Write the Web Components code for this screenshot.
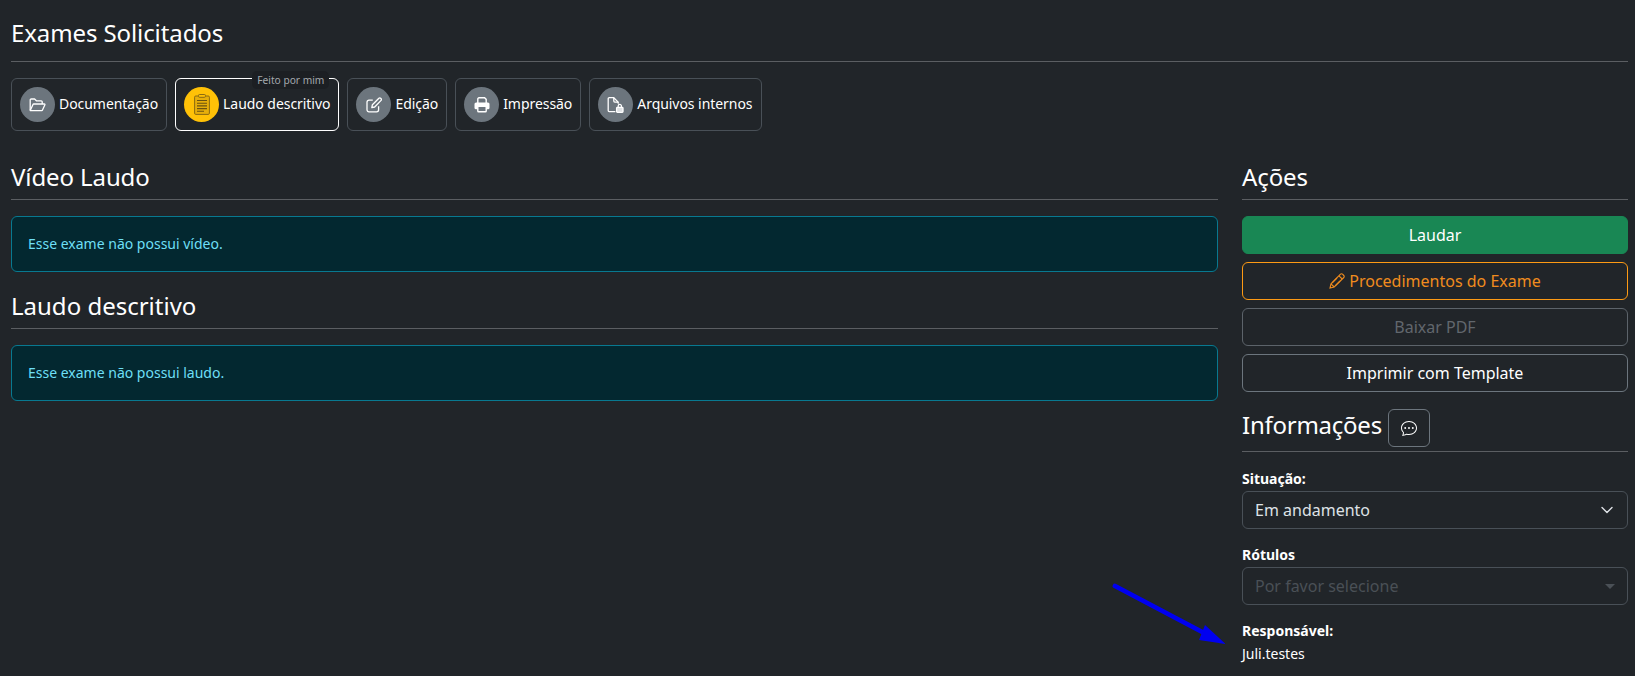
<!DOCTYPE html>
<html lang="pt-BR">
<head>
<meta charset="utf-8">
<title>Exames Solicitados</title>
<style>
  html, body { margin: 0; height: 100%; }
  body {
    background: #212529;
    color: #fff;
    font: 16px/24px "Noto Sans", sans-serif;
    overflow: hidden;
  }
</style>
</head>
<body>
<exam-page></exam-page>

<template id="tmpl-heading">
  <style>
    :host { display: block; border-bottom: 1px solid #5b5e62; }
    .in { display: flex; align-items: center; gap: 6px; min-height: 34px; font-size: 24px; line-height: 29px; padding-bottom: var(--pb, 6px); color: #fff; letter-spacing: var(--ls, -.1px); }
  </style>
  <div class="in"><slot></slot></div>
</template>

<template id="tmpl-tab">
  <style>
    :host { display: block; position: relative; }
    .tab { display: flex; align-items: center; gap: 4px; height: 53px; box-sizing: border-box; padding: 0 8px; border: 1px solid #495057; border-radius: 6px; font-size: 14px; letter-spacing: -.05px; white-space: nowrap; color: #fff; }
    .label { padding-bottom: 2px; }
    :host([active]) .tab { border-color: #fff; }
    .circle { width: 35px; height: 35px; border-radius: 50%; background: #6c757d; display: flex; align-items: center; justify-content: center; flex: none; }
    :host([active]) .circle { background: #ffc107; }
    .badge { position: absolute; top: -7px; right: 10px; height: 18px; padding: 0 5px; border-radius: 5px; background: #1c1f23; color: #a3a8ad; font-size: 10.2px; line-height: 18px; white-space: nowrap; letter-spacing: 0; }
    .badge:empty { display: none; }
  </style>
  <div class="tab"><span class="circle"><slot name="icon"></slot></span><span class="label"><slot></slot></span></div>
  <span class="badge"></span>
</template>

<template id="tmpl-alert">
  <style>
    :host { display: flex; height: 56px; box-sizing: border-box; padding: 0 16px; align-items: center; background: #032830; border: 1px solid #087990; border-radius: 6px; color: #6edff6; font-size: 14px; }
  </style>
  <slot></slot>
</template>

<template id="tmpl-btn">
  <style>
    :host { display: flex; align-items: center; justify-content: center; gap: 4px; height: 38px; box-sizing: border-box; border: 1px solid #6c757d; border-radius: 6px; color: #fff; font-size: 16px; }
    :host([kind="success"]) { background: #198754; border-color: #198754; }
    :host([kind="warning"]) { border-color: #fd9a14; color: #f08c1e; }
    :host([kind="disabled"]) { border-color: #5c636a; color: #61676d; }
  </style>
  <slot></slot>
</template>

<template id="tmpl-field">
  <style>
    :host { display: block; }
    label { display: block; font-size: 14px; font-weight: 700; line-height: 21px; margin-bottom: 2px; color: #fff; }
    .box { display: flex; align-items: center; justify-content: space-between; height: 38px; box-sizing: border-box; padding: 0 12px; border: 1px solid #495057; border-radius: 6px; color: #dee2e6; font-size: 16px; }
    :host([disabled]) .box { color: #4a5056; }
    svg { display: block; }
  </style>
  <label></label>
  <div class="box"><span><slot></slot></span><span class="arrow"></span></div>
</template>

<script>
  const ICONS = {
    folder: '<svg width="17" height="16" viewBox="0 0 17 16" fill="none" stroke="#fff" stroke-width="1.3" stroke-linejoin="round"><path d="M1.2 13V3a1 1 0 0 1 1-1h3.4l1.8 1.8h4.8a1 1 0 0 1 1 1V7"/><path d="M1.2 13.6 4 7.4a.8.8 0 0 1 .7-.4h10.6a.6.6 0 0 1 .6.8l-2.4 5.3a.8.8 0 0 1-.7.5H1.8a.6.6 0 0 1-.6-.6z"/></svg>',
    clipboard: '<svg width="16" height="21" viewBox="0 0 16 21"><rect x=".6" y="2" width="14.8" height="18.4" rx="1.2" fill="#e6ae0b" stroke="#8a6a12" stroke-width="1"/><rect x="4.6" y=".5" width="6.8" height="2.8" rx=".8" fill="#ffc107" stroke="#8a6a12" stroke-width="1"/><path d="M3 6.5h10M3 9.2h10M3 11.9h10M3 14.6h10M3 17.2h7" stroke="#6b5310" stroke-width="1.1"/></svg>',
    edit: '<svg width="16" height="16" viewBox="0 0 16 16" fill="none" stroke="#fff" stroke-width="1.3" stroke-linejoin="round"><path d="M12.6 9.2v3.6a2 2 0 0 1-2 2H3a2 2 0 0 1-2-2V5.2a2 2 0 0 1 2-2h3.8"/><path d="m5.8 10.6.6-2.9L12.9 1.2a1.2 1.2 0 0 1 1.7 0l.5.5a1.2 1.2 0 0 1 0 1.7L8.7 10z"/></svg>',
    printer: '<svg width="16" height="16" viewBox="0 0 16 16"><path d="M3.8 6V2a1.2 1.2 0 0 1 1.2-1.2h5.6L12.2 2.4V6" fill="none" stroke="#fff" stroke-width="1.4"/><rect x=".5" y="5.5" width="15" height="6.8" rx="1.6" fill="#fff"/><rect x="3.8" y="9.4" width="8.4" height="5.4" rx=".8" fill="#6c757d" stroke="#fff" stroke-width="1.4"/></svg>',
    filelock: '<svg width="17" height="16" viewBox="0 0 17 16" fill="none" stroke="#fff" stroke-width="1.3" stroke-linejoin="round"><path d="M8.4 14.6H2.2a1 1 0 0 1-1-1V1.7a1 1 0 0 1 1-1h4.6l4.4 4.4v1.6"/><path d="M6.8.7v3.4a1 1 0 0 0 1 1h3.4"/><rect x="9.6" y="10.4" width="6.4" height="4.9" rx=".8" fill="#dfe2e5"/><path d="M11.2 10.4V9a1.6 1.6 0 0 1 3.2 0v1.4"/></svg>',
    pencil: '<svg width="16" height="16" viewBox="0 0 16 16" fill="none" stroke="#f08c1e" stroke-width="1.1"><path d="M11.5 1.2a1.4 1.4 0 0 1 2 0l1.3 1.3a1.4 1.4 0 0 1 0 2L5.2 14 1 15l1-4.2z"/><path d="M10 2.8 13.2 6M2 10.8 5.2 14M8 5l-4.8 4.8M11 8l-4.8 4.8"/></svg>',
    chat: '<svg width="16" height="16" viewBox="0 0 16 16" fill="#fff"><path d="M5 8a1 1 0 1 1-2 0 1 1 0 0 1 2 0m4 0a1 1 0 1 1-2 0 1 1 0 0 1 2 0m3 1a1 1 0 1 0 0-2 1 1 0 0 0 0 2" transform="translate(.4 .4) scale(.95)"/><path d="m2.165 15.803.02-.004c1.83-.363 2.948-.842 3.468-1.105A9 9 0 0 0 8 15c4.418 0 8-3.134 8-7s-3.582-7-8-7-8 3.134-8 7c0 1.76.743 3.37 1.97 4.6a10.4 10.4 0 0 1-.524 2.318l-.003.011a11 11 0 0 1-.244.637c-.079.186.074.394.273.362a22 22 0 0 0 .693-.125m.8-3.108a1 1 0 0 0-.287-.801C1.618 10.83 1 9.468 1 8c0-3.192 3.004-6 7-6s7 2.808 7 6-3.004 6-7 6a8 8 0 0 1-2.088-.272 1 1 0 0 0-.711.074c-.387.196-1.24.57-2.634.893a11 11 0 0 0 .398-2"/></svg>',
    chevron: '<svg width="16" height="16" viewBox="0 0 16 16" fill="none" stroke="#dee2e6" stroke-width="1.4" stroke-linecap="round" stroke-linejoin="round"><path d="m3 5.5 5 5 5-5"/></svg>',
    caret: '<svg width="10" height="5" viewBox="0 0 10 5" fill="#4a5056"><path d="M0 0h10L5 5z"/></svg>'
  };

  // small helper, every element below just clones its template
  function mount(el, id) {
    const root = el.attachShadow({ mode: "open" });
    root.appendChild(document.getElementById(id).content.cloneNode(true));
    return root;
  }

  class SectionHeading extends HTMLElement {
    constructor() { super(); mount(this, "tmpl-heading"); }
  }
  class ExamTab extends HTMLElement {
    constructor() { super(); this.root = mount(this, "tmpl-tab"); }
    connectedCallback() {
      this.root.querySelector(".badge").textContent = this.getAttribute("badge") || "";
    }
  }
  class InfoAlert extends HTMLElement {
    constructor() { super(); mount(this, "tmpl-alert"); }
  }
  class ActionButton extends HTMLElement {
    constructor() { super(); mount(this, "tmpl-btn"); }
  }
  class SelectField extends HTMLElement {
    constructor() { super(); this.root = mount(this, "tmpl-field"); }
    connectedCallback() {
      this.root.querySelector("label").textContent = this.getAttribute("label");
      this.root.querySelector(".arrow").innerHTML = this.hasAttribute("disabled") ? ICONS.caret : ICONS.chevron;
    }
  }

  class ExamPage extends HTMLElement {
    constructor() {
      super();
      const root = this.attachShadow({ mode: "open" });
      root.innerHTML = `
        <style>
          :host { display: block; position: relative; height: 676px; box-sizing: border-box; padding: 15px 7px 0 11px; }
          .tabs { display: flex; gap: 8px; margin-top: 16px; }
          .cols { display: grid; grid-template-columns: 1fr 386px; column-gap: 24px; margin-top: 28px; }
          .stack { display: flex; flex-direction: column; }
          .mt-alert { margin-top: 16px; }
          .mt-h { margin-top: 16px; }
          .btns { display: flex; flex-direction: column; gap: 8px; margin-top: 16px; }
          .chat { width: 42px; height: 38px; box-sizing: border-box; border: 1px solid #6c757d; border-radius: 6px; display: flex; align-items: center; justify-content: center; }
          .up { padding-bottom: 7px; }
          .resp { margin-top: 15px; font-size: 14px; line-height: 21px; }
          .resp b { display: block; margin-bottom: 2px; }
          .arrow { position: absolute; left: 1110px; top: 578px; }
          .zero { line-height: 0; }
          svg { display: block; }
        </style>
        <section-heading style="--pb:12px">Exames Solicitados</section-heading>
        <div class="tabs">
          <exam-tab><span slot="icon" class="zero">${ICONS.folder}</span>Documentação</exam-tab>
          <exam-tab active badge="Feito por mim"><span slot="icon" class="zero">${ICONS.clipboard}</span>Laudo descritivo</exam-tab>
          <exam-tab><span slot="icon" class="zero">${ICONS.edit}</span>Edição</exam-tab>
          <exam-tab><span slot="icon" class="zero">${ICONS.printer}</span>Impressão</exam-tab>
          <exam-tab><span slot="icon" class="zero">${ICONS.filelock}</span>Arquivos internos</exam-tab>
        </div>
        <div class="cols">
          <div class="stack">
            <section-heading>Vídeo Laudo</section-heading>
            <info-alert class="mt-alert">Esse exame não possui vídeo.</info-alert>
            <section-heading class="mt-h" style="--ls:0">Laudo descritivo</section-heading>
            <info-alert class="mt-alert">Esse exame não possui laudo.</info-alert>
          </div>
          <div class="stack">
            <section-heading>Ações</section-heading>
            <div class="btns">
              <action-button kind="success">Laudar</action-button>
              <action-button kind="warning">${ICONS.pencil}Procedimentos do Exame</action-button>
              <action-button kind="disabled">Baixar PDF</action-button>
              <action-button>Imprimir com Template</action-button>
            </div>
            <section-heading style="margin-top:17px;--pb:4px;--ls:-.25px"><span class="up">Informações</span><span class="chat">${ICONS.chat}</span></section-heading>
            <select-field label="Situação:" style="margin-top:16px">Em andamento</select-field>
            <select-field label="Rótulos" style="margin-top:15px" disabled>Por favor selecione</select-field>
            <div class="resp"><b>Responsável:</b>Juli.testes</div>
          </div>
        </div>
        <svg class="arrow" width="118" height="70" viewBox="0 0 118 70">
          <path d="M5 8 96 56" stroke="#0000f0" stroke-width="4.8" stroke-linecap="round"/>
          <path d="M115.6 66 95 47 89 62z" fill="#0000f0"/>
        </svg>`;
    }
  }

  customElements.define("section-heading", SectionHeading);
  customElements.define("exam-tab", ExamTab);
  customElements.define("info-alert", InfoAlert);
  customElements.define("action-button", ActionButton);
  customElements.define("select-field", SelectField);
  customElements.define("exam-page", ExamPage);
</script>
</body>
</html>
